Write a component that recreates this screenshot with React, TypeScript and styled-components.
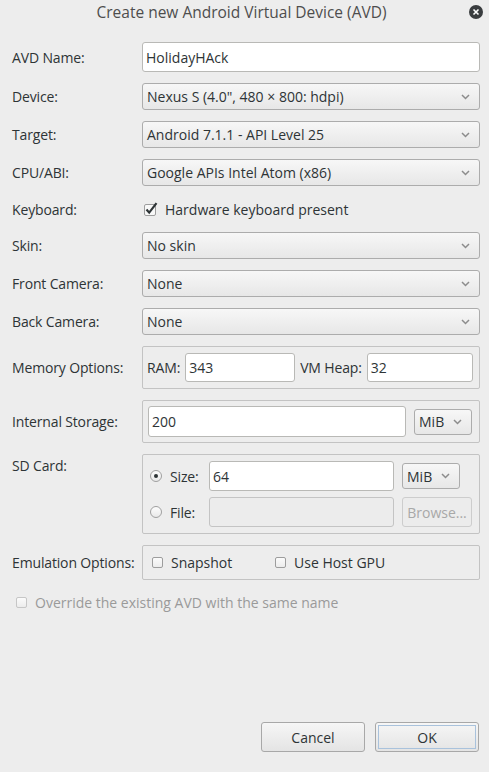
import React from "react";
import styled, { createGlobalStyle } from "styled-components";

const Global = createGlobalStyle`
  html, body { margin: 0; padding: 0; background: #ededed; }
  body { font-family: "Open Sans", "Noto Sans", "DejaVu Sans", sans-serif; font-size: 14px; color: #2e3436; }
  * { box-sizing: border-box; }
`;

const Window = styled.div`
  width: 489px;
  height: 772px;
  display: flex;
  flex-direction: column;
  background: #ededed;
`;

const Header = styled.div`
  display: grid;
  grid-template-columns: 1fr auto 1fr;
  align-items: center;
  height: 24px;
  padding: 0 6px 0 0;
`;

const Title = styled.div`
  grid-column: 2;
  font-size: 15.5px;
  color: #4d4d4d;
  white-space: nowrap;
`;

const Close = styled.div`
  grid-column: 3;
  justify-self: end;
  width: 14px;
  height: 14px;
  border-radius: 50%;
  background: #3a3d3f;
  display: flex;
  align-items: center;
  justify-content: center;
`;

const Form = styled.div`
  display: grid;
  grid-template-columns: 130px 1fr;
  row-gap: 11px;
  padding: 18px 9px 0 12px;
  align-items: center;
`;

const Label = styled.div<{ $top?: boolean }>`
  font-size: 14px;
  letter-spacing: -0.15px;
  white-space: nowrap;
  align-self: ${(p) => (p.$top ? "start" : "center")};
  padding-top: ${(p) => (p.$top ? "2px" : "0")};
`;

const TextInput = styled.div<{ $h?: number; $w?: number; $disabled?: boolean }>`
  height: ${(p) => p.$h ?? 30}px;
  ${(p) => (p.$w ? `width: ${p.$w}px; flex: none;` : "flex: 1;")}
  min-width: 0;
  background: ${(p) => (p.$disabled ? "#ececec" : "#ffffff")};
  border: 1px solid ${(p) => (p.$disabled ? "#c4c4c4" : "#b9b9b6")};
  border-radius: 3px;
  display: flex;
  align-items: center;
  padding-left: 3px;
  font-size: 14px;
`;

const SelectBox = styled.div<{ $w?: number; $h?: number }>`
  height: ${(p) => p.$h ?? 27}px;
  ${(p) => (p.$w ? `width: ${p.$w}px;` : "")}
  background: linear-gradient(#f7f7f7, #e7e7e7);
  border: 1px solid #acacac;
  border-radius: 3px;
  display: flex;
  align-items: center;
  justify-content: space-between;
  padding: 0 9px 0 4px;
  font-size: 14px;
  white-space: nowrap;
`;

const Chevron = () => (
  <svg width="9" height="6" viewBox="0 0 9 6">
    <path d="M1 1 L4.5 4.5 L8 1" fill="none" stroke="#8c8c8c" strokeWidth="1.5" />
  </svg>
);

const Select = ({ value, w, h }: { value: string; w?: number; h?: number }) => (
  <SelectBox $w={w} $h={h}>
    <span>{value}</span>
    <Chevron />
  </SelectBox>
);

const CheckRow = styled.div<{ $muted?: boolean }>`
  display: flex;
  align-items: center;
  gap: 8px;
  height: 23px;
  font-size: 14px;
  color: ${(p) => (p.$muted ? "#9a9a9a" : "#2e3436")};
  white-space: nowrap;
`;

const KbRow = styled(CheckRow)`
  padding-left: 2px;
  gap: 6px;
  height: 24px;
`;

const BoxIcon = styled.span<{ $muted?: boolean }>`
  width: 11px;
  height: 11px;
  border: 1px solid ${(p) => (p.$muted ? "#c6c6c6" : "#9d9d9d")};
  border-radius: 2px;
  background: linear-gradient(#fbfbfb, #ececec);
  flex: none;
`;

const CheckedIcon = () => (
  <svg width="15" height="14" viewBox="0 0 15 14">
    <rect x="0.5" y="2.5" width="11" height="11" rx="1.5" fill="#f8f8f8" stroke="#9d9d9d" />
    <path d="M2.5 7.5 L5.2 10.6 L12.5 1.2" fill="none" stroke="#2e3436" strokeWidth="2.2" strokeLinejoin="miter" />
  </svg>
);

const Group = styled.div<{ $pad?: string }>`
  border: 1px solid #c3c3c3;
  border-radius: 2px;
  padding: ${(p) => p.$pad ?? "5px 6px"};
`;

const MemoryGroup = styled(Group)`
  display: flex;
  align-items: center;
  gap: 5px;
  height: 43px;
  padding: 0 6px 1px 4px;
`;

const InlineLabel = styled.span<{ $ml?: number }>`
  white-space: nowrap;
  margin-left: ${(p) => p.$ml ?? 0}px;
  font-size: 14px;
  letter-spacing: -0.15px;
`;

const StorageGroup = styled(Group)`
  display: flex;
  align-items: center;
  gap: 8px;
  height: 43px;
  padding: 0 7px 0 5px;
`;

const SdGroup = styled(Group)`
  display: grid;
  grid-template-columns: 12px 31px 1fr 70px;
  grid-auto-rows: 30px;
  column-gap: 8px;
  row-gap: 6px;
  align-items: center;
  padding: 6px 7px 6px 7px;
  height: 80px;
`;

const Radio = styled.span<{ $on?: boolean }>`
  width: 12px;
  height: 12px;
  border-radius: 50%;
  border: 1px solid #a0a0a0;
  background: linear-gradient(#fdfdfd, #e9e9e9);
  display: flex;
  align-items: center;
  justify-content: center;
  &::after {
    content: "";
    width: 4px;
    height: 4px;
    border-radius: 50%;
    background: ${(p) => (p.$on ? "#2e3436" : "transparent")};
  }
`;

const SmallButton = styled.div<{ $disabled?: boolean; $w?: number }>`
  height: 30px;
  width: ${(p) => p.$w ?? 70}px;
  border: 1px solid ${(p) => (p.$disabled ? "#cdcdcd" : "#acacac")};
  border-radius: 3px;
  background: ${(p) => (p.$disabled ? "#ececec" : "linear-gradient(#f7f7f7, #e7e7e7)")};
  color: ${(p) => (p.$disabled ? "#a8a8a8" : "#2e3436")};
  display: flex;
  align-items: center;
  justify-content: center;
  font-size: 14px;
`;

const EmuGroup = styled(Group)`
  display: grid;
  grid-template-columns: 123px auto;
  align-items: center;
  height: 35px;
  padding: 0 0 0 9px;
`;

const Override = styled(CheckRow)`
  padding-left: 16px;
  margin-top: 11px;
`;

const Spacer = styled.div`
  flex: 1;
`;

const Footer = styled.div`
  display: flex;
  justify-content: flex-end;
  gap: 10px;
  padding: 0 10px 20px 0;
`;

const Button = styled.div<{ $focus?: boolean }>`
  width: 104px;
  height: 30px;
  border: 1px solid #a8a8a8;
  border-radius: 3px;
  background: linear-gradient(#f6f6f6, #e4e4e4);
  display: flex;
  align-items: center;
  justify-content: center;
  font-size: 14px;
  ${(p) => (p.$focus ? "outline: 1px solid #a9c2dc; outline-offset: -4px;" : "")}
`;

export default function App() {
  return (
    <Window>
      <Global />
      <Header>
        <Title>Create new Android Virtual Device (AVD)</Title>
        <Close>
          <svg width="8" height="8" viewBox="0 0 8 8">
            <path d="M1.5 1.5 L6.5 6.5 M6.5 1.5 L1.5 6.5" stroke="#ffffff" strokeWidth="1.6" />
          </svg>
        </Close>
      </Header>
      <Form>
        <Label>AVD Name:</Label>
        <TextInput>HolidayHAck</TextInput>
        <Label>Device:</Label>
        <Select value={"Nexus S (4.0\", 480 × 800: hdpi)"} />
        <Label>Target:</Label>
        <Select value="Android 7.1.1 - API Level 25" />
        <Label>CPU/ABI:</Label>
        <Select value="Google APIs Intel Atom (x86)" />
        <Label>Keyboard:</Label>
        <KbRow>
          <CheckedIcon />
          <span>Hardware keyboard present</span>
        </KbRow>
        <Label>Skin:</Label>
        <Select value="No skin" />
        <Label>Front Camera:</Label>
        <Select value="None" />
        <Label>Back Camera:</Label>
        <Select value="None" />
        <Label>Memory Options:</Label>
        <MemoryGroup>
          <InlineLabel>RAM:</InlineLabel>
          <TextInput $w={110} $h={29}>343</TextInput>
          <InlineLabel>VM Heap:</InlineLabel>
          <TextInput $h={29}>32</TextInput>
        </MemoryGroup>
        <Label>Internal Storage:</Label>
        <StorageGroup>
          <TextInput $h={31}>200</TextInput>
          <Select value="MiB" w={58} h={26} />
        </StorageGroup>
        <Label $top>SD Card:</Label>
        <SdGroup>
          <Radio $on />
          <InlineLabel>Size:</InlineLabel>
          <TextInput>64</TextInput>
          <Select value="MiB" w={58} h={26} />
          <Radio />
          <InlineLabel>File:</InlineLabel>
          <TextInput $disabled />
          <SmallButton $disabled>Browse...</SmallButton>
        </SdGroup>
        <Label>Emulation Options:</Label>
        <EmuGroup>
          <CheckRow>
            <BoxIcon />
            <span>Snapshot</span>
          </CheckRow>
          <CheckRow>
            <BoxIcon />
            <span>Use Host GPU</span>
          </CheckRow>
        </EmuGroup>
      </Form>
      <Override $muted>
        <BoxIcon $muted />
        <span>Override the existing AVD with the same name</span>
      </Override>
      <Spacer />
      <Footer>
        <Button>Cancel</Button>
        <Button $focus>OK</Button>
      </Footer>
    </Window>
  );
}
